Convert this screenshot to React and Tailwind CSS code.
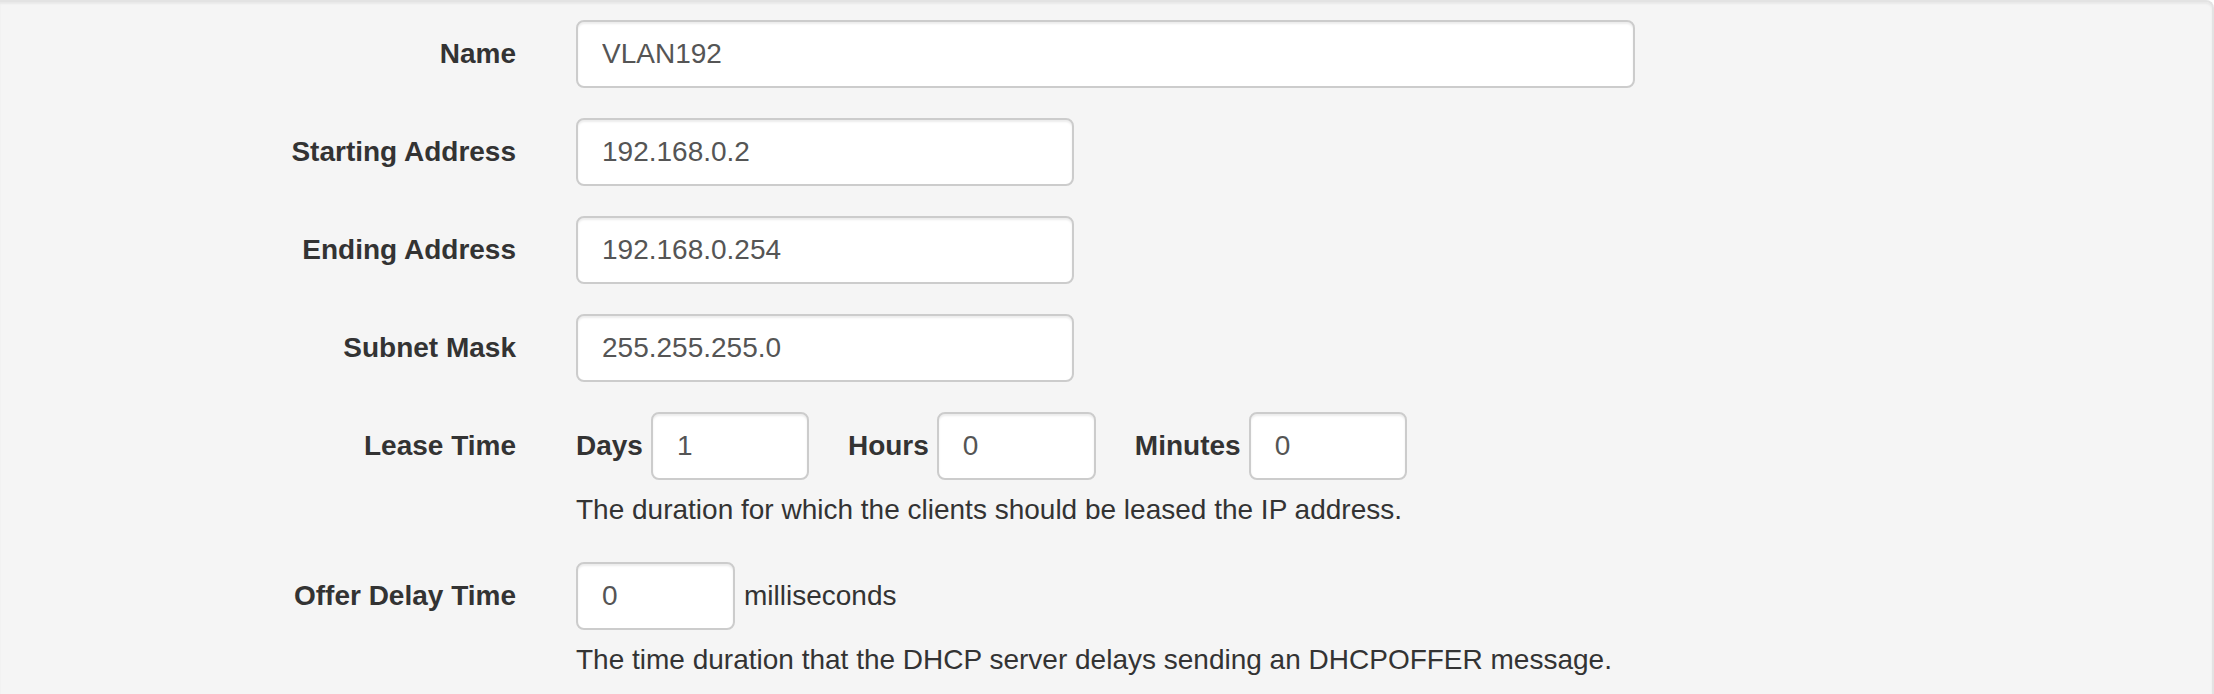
import React from 'react';

const inputCls =
  'h-[68px] border-2 border-[#ccc] rounded-[8px] bg-white px-[24px] text-[28px] leading-[40px] text-[#555] shadow-[inset_0_2px_2px_rgba(0,0,0,0.075)] outline-none';

const Field = ({ label, children }) => (
  <div className="flex items-start mb-[30px]">
    <label className="w-[516px] shrink-0 text-right font-bold pt-[14px] leading-[40px] text-[#333]">
      {label}
    </label>
    <div className="ml-[60px]">{children}</div>
  </div>
);

const TextBox = ({ value, width }) => (
  <input readOnly value={value} className={`${inputCls} ${width}`} />
);

const App = () => {
  return (
    <div className="min-h-[694px] bg-[#f5f5f5] border-t-2 border-r-2 border-[#e3e3e3] rounded-tr-[8px] shadow-[inset_0_2px_2px_rgba(0,0,0,0.05)] pt-[18px] font-['Liberation_Sans',Arial,sans-serif] text-[28px] text-[#333]">
      <Field label="Name">
        <TextBox value="VLAN192" width="w-[1059px]" />
      </Field>

      <Field label="Starting Address">
        <TextBox value="192.168.0.2" width="w-[498px]" />
      </Field>

      <Field label="Ending Address">
        <TextBox value="192.168.0.254" width="w-[498px]" />
      </Field>

      <Field label="Subnet Mask">
        <TextBox value="255.255.255.0" width="w-[498px]" />
      </Field>

      <div className="flex items-start mb-[32px]">
        <label className="w-[516px] shrink-0 text-right font-bold pt-[14px] leading-[40px]">
          Lease Time
        </label>
        <div className="ml-[60px]">
          <div className="flex items-center">
            <span className="font-bold mr-[8px]">Days</span>
            <TextBox value="1" width="w-[158px]" />
            <span className="font-bold ml-[39px] mr-[8px]">Hours</span>
            <TextBox value="0" width="w-[159px]" />
            <span className="font-bold ml-[39px] mr-[8px]">Minutes</span>
            <TextBox value="0" width="w-[158px]" />
          </div>
          <p className="mt-[10px] leading-[40px]">
            The duration for which the clients should be leased the IP address.
          </p>
        </div>
      </div>

      <div className="flex items-start">
        <label className="w-[516px] shrink-0 text-right font-bold pt-[14px] leading-[40px]">
          Offer Delay Time
        </label>
        <div className="ml-[60px]">
          <div className="flex items-center">
            <TextBox value="0" width="w-[159px]" />
            <span className="ml-[9px]">milliseconds</span>
          </div>
          <p className="mt-[10px] leading-[40px]">
            The time duration that the DHCP server delays sending an DHCPOFFER message.
          </p>
        </div>
      </div>
    </div>
  );
};

export default App;
